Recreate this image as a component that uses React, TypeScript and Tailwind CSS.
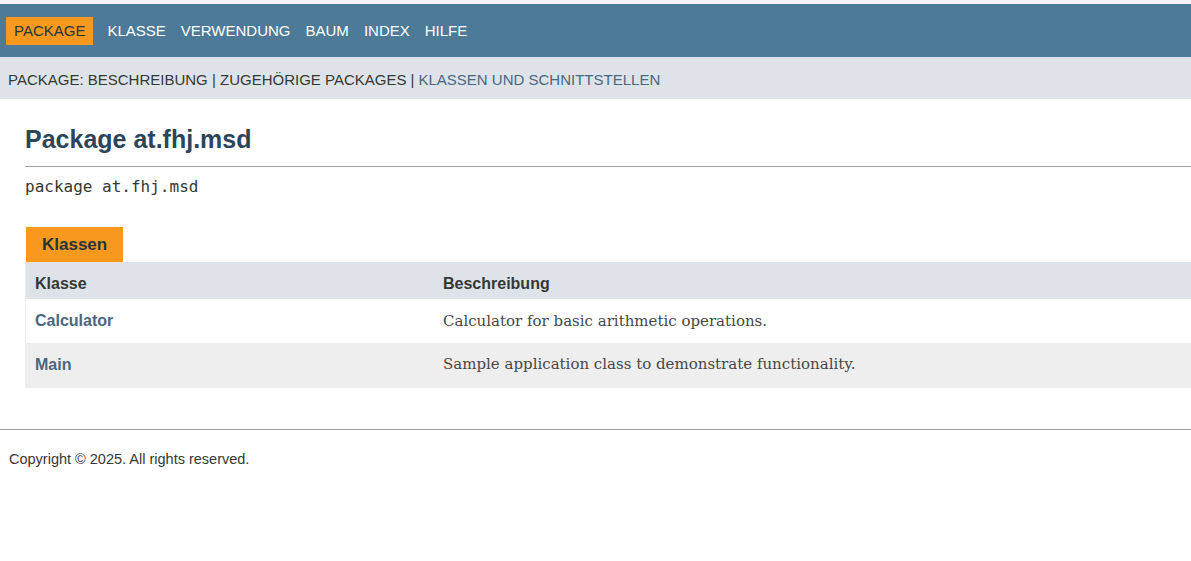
import React from "react";

const sans = { fontFamily: '"Liberation Sans", Arial, sans-serif' };
const serif = { fontFamily: '"DejaVu Serif", Georgia, serif' };

export default function App() {
  const nav = ["KLASSE", "VERWENDUNG", "BAUM", "INDEX", "HILFE"];
  return (
    <div className="w-[1191px] min-h-[561px] bg-white text-[#353833]" style={sans}>
      <div className="h-[4px] bg-[#f3f2f7]" />
      <div className="h-[53px] bg-[#4d7a97] flex items-center pl-[6px] pt-[1px] text-[15px]">
        <span className="bg-[#f8981d] text-[#253441] h-[28px] px-[8px] pt-[1px] flex items-center">PACKAGE</span>
        <div className="flex gap-[15px] ml-[14px] pt-[1px] text-white">
          {nav.map((n) => (
            <span key={n}>{n}</span>
          ))}
        </div>
      </div>
      <div className="h-[42px] bg-[#dee3e9] flex items-center pl-[8px] pt-[4px] text-[15px]">
        <span>PACKAGE: BESCHREIBUNG | ZUGEHÖRIGE PACKAGES | </span>
        <span className="text-[#4a6782] ml-[4px]">KLASSEN UND SCHNITTSTELLEN</span>
      </div>
      <main className="pl-[25px]">
        <h1 className="text-[25px] font-bold text-[#2c4557] pt-[25px] pb-[12px] leading-[30px]">Package at.fhj.msd</h1>
        <div className="h-px bg-[#a0a0a0]" />
        <div className="text-[16px] mt-[10px] leading-[20px]" style={{ fontFamily: '"DejaVu Sans Mono", monospace' }}>
          package at.fhj.msd
        </div>
        <div className="mt-[30px]">
          <div className="inline-flex h-[35px] items-center bg-[#f8981d] px-[16px] ml-px text-[17px] font-bold text-[#253441]">
            Klassen
          </div>
          <div className="grid grid-cols-[408px_1fr] border-l border-[#eeeeee] text-[16px]">
            <div className="bg-[#dee3e9] h-[37px] flex items-center pl-[9px] pt-[6px] font-bold">Klasse</div>
            <div className="bg-[#dee3e9] h-[37px] flex items-center pl-[9px] pt-[6px] font-bold">Beschreibung</div>
            <div className="bg-white h-[44px] flex items-center pl-[9px] font-bold text-[#4a6782]">Calculator</div>
            <div className="bg-white h-[44px] flex items-center pl-[9px] text-[15px] text-[#474747]" style={serif}>
              Calculator for basic arithmetic operations.
            </div>
            <div className="bg-[#eeeeee] h-[45px] flex items-center pl-[9px] pb-[2px] font-bold text-[#4a6782]">Main</div>
            <div className="bg-[#eeeeee] h-[45px] flex items-center pl-[9px] pb-[2px] text-[15px] text-[#474747]" style={serif}>
              Sample application class to demonstrate functionality.
            </div>
          </div>
        </div>
      </main>
      <div className="h-px bg-[#a0a0a0] mt-[41px]" />
      <div className="pl-[9px] pt-[20px] text-[14.5px] leading-[18px]">Copyright © 2025. All rights reserved.</div>
    </div>
  );
}
